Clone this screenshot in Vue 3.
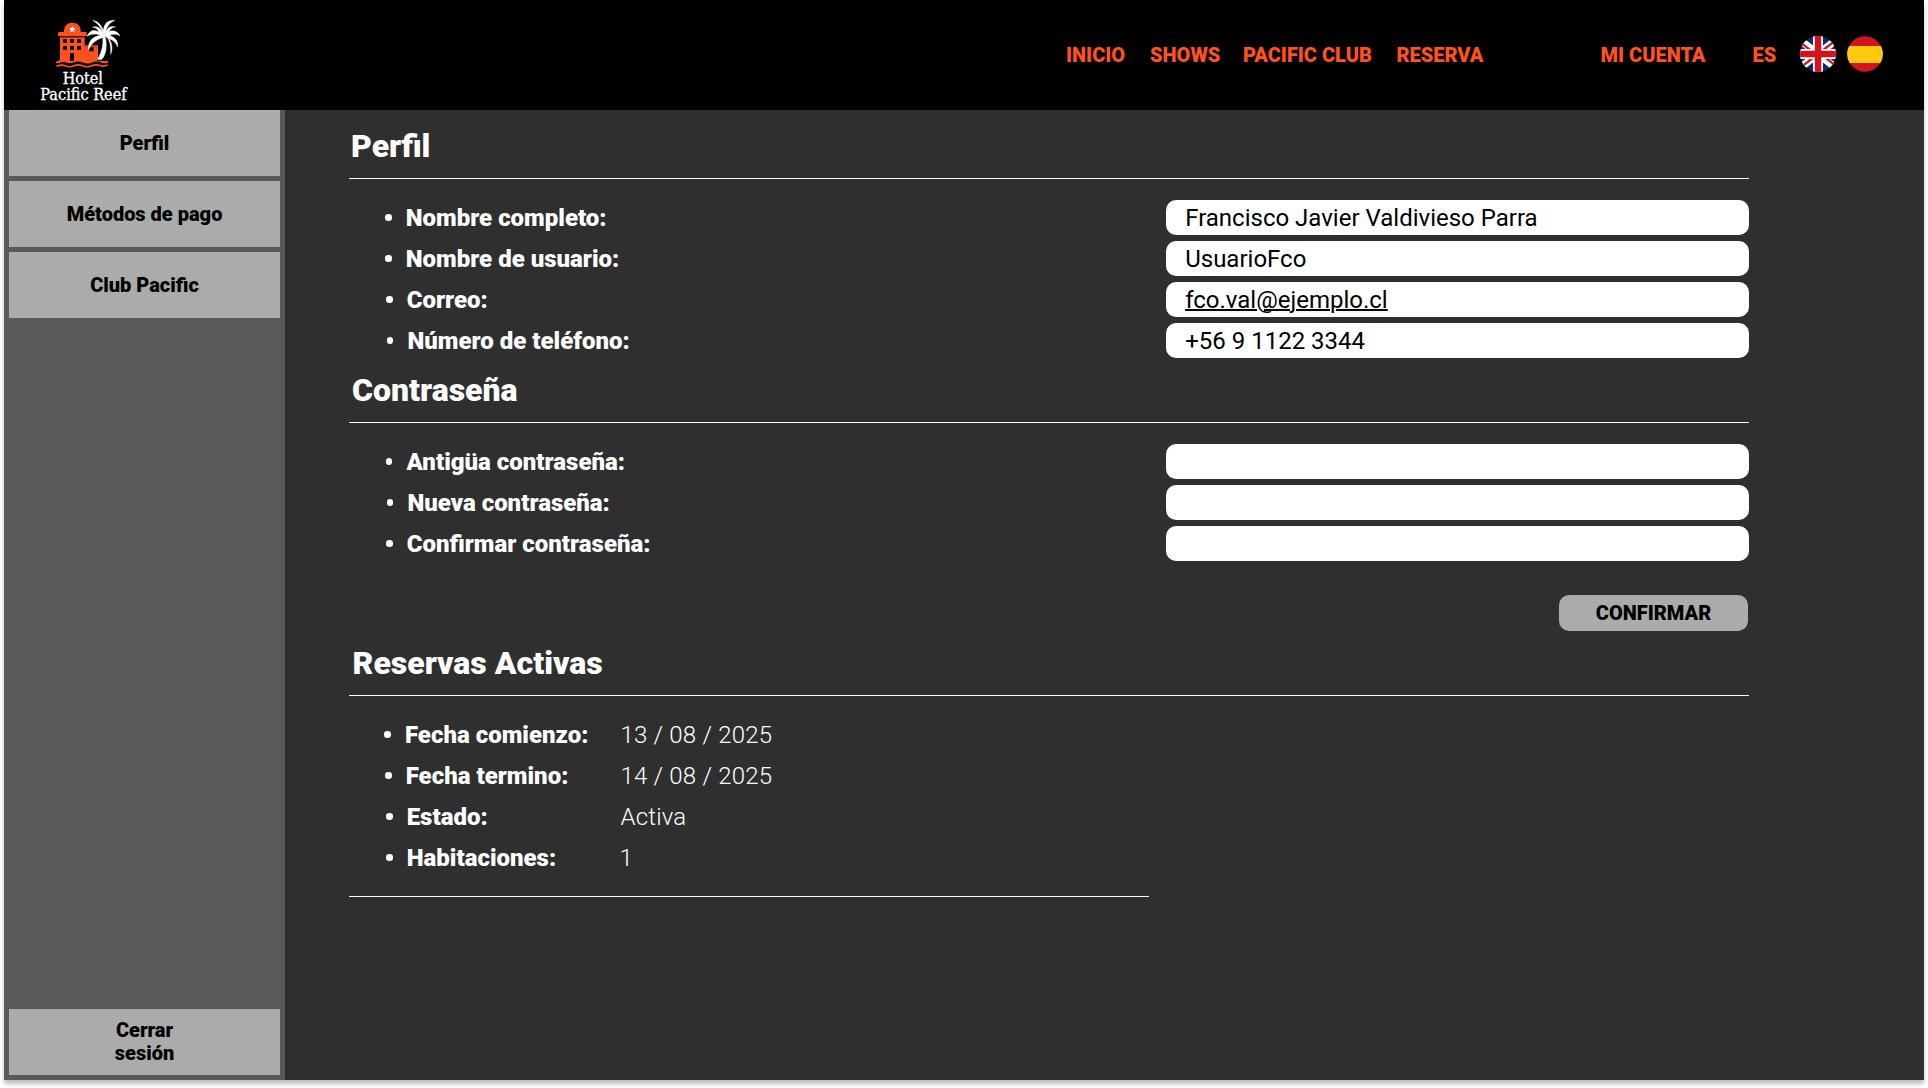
<script setup>
const nav = ['INICIO', 'SHOWS', 'PACIFIC CLUB', 'RESERVA', 'MI CUENTA', 'ES']
const menu = ['Perfil', 'Métodos de pago', 'Club Pacific']
const profile = [
  { label: 'Nombre completo:', value: 'Francisco Javier Valdivieso Parra', nudge: 0 },
  { label: 'Nombre de usuario:', value: 'UsuarioFco', nudge: 0 },
  { label: 'Correo:', value: 'fco.val@ejemplo.cl', link: true, nudge: 1 },
  { label: 'Número de teléfono:', value: '+56 9 1122 3344', nudge: 1.7 },
]
const password = [
  { label: 'Antigüa contraseña:', nudge: 0.9 },
  { label: 'Nueva contraseña:', nudge: 1.7 },
  { label: 'Confirmar contraseña:', nudge: 1 },
]
const booking = [
  { label: 'Fecha comienzo:', value: '13 / 08 / 2025', nudge: -0.7 },
  { label: 'Fecha termino:', value: '14 / 08 / 2025', nudge: 0 },
  { label: 'Estado:', value: 'Activa', nudge: 1 },
  { label: 'Habitaciones:', value: '1', nudge: 1, count: true },
]
</script>

<template>
  <div class="page">
    <header class="top">
      <svg class="logo" viewBox="0 0 300 300" width="100" height="100">
        <g fill="#ff5120">
          <path d="M72 66V60Q74 39 97 38Q120 39 122 60V66H137Q140 66 140 69V78H54V69Q54 66 57 66Z" />
          <path d="M60 80H134V105H174V146L171 153H204V159Q190 161 181 157Q168 152 155 158Q140 164 127 157Q114 152 102 157Q89 163 76 157Q66 154 58 159L48 160V155Q54 154 60 150Z" />
        </g>
        <path d="M49 169Q64 163 76 167Q89 173 102 167Q114 162 127 167Q141 173 155 167Q168 162 181 167Q191 170 203 165" fill="none" stroke="#ff5120" stroke-width="5" />
        <path d="M60 82H132M134 108H172" stroke="#842a11" stroke-width="3" />
        <path d="M69 87h12v11h-12zM90 87h12v11h-12zM111 87h12v11h-12zM69 108h12v11h-12zM90 108h12v11h-12zM111 108h12v11h-12zM90 129h12v24h-12zM148 112h13v12h-13z" fill="#000" />
        <path d="M97 48l2.700 6.300 7 .7-5.200 4.800 1.500 7.200-6-3.700-6 3.700 1.500-7.200-5.200-4.800 7-.7z" fill="#fff" />
        <g fill="#fff" stroke="#fff" stroke-width="1.200" stroke-linejoin="round">
          <path d="M188 78L195 76Q203 110 195 131Q192 142 184 149L173 148Q184 127 187 112Q190 95 188 78Z" />
          <path d="M191 72Q176 43 157 52Q169 50 177 66Q153 52 141 79Q161 67 181 76Q143 83 145 119Q159 91 187 83L196 78Q214 90 212 133Q222 112 208 86Q225 91 233 111Q237 86 208 76Q225 69 240 77Q229 58 206 64Q217 50 227 51Q205 44 197 67Q200 43 224 31Q193 29 190 61Q181 35 158 31Q181 45 191 72Z" />
        </g>
        <g class="logo-text" fill="#fff">
          <text x="68" y="222" textLength="121" lengthAdjust="spacingAndGlyphs">Hotel</text>
          <text x="1" y="270" textLength="259" lengthAdjust="spacingAndGlyphs">Pacific Reef</text>
        </g>
      </svg>
      <nav class="nav">
        <a v-for="item in nav" :key="item">{{ item }}</a>
      </nav>
      <div class="flags">
        <svg viewBox="0 0 36 36" width="36" height="36">
          <defs><clipPath id="round"><circle cx="18" cy="18" r="18" /></clipPath></defs>
          <g clip-path="url(#round)">
            <path d="M0 0H36V36H0Z" fill="#082b69" />
            <path d="M-4 1L40 35M40 1L-4 35" stroke="#fff" stroke-width="7.500" />
            <path d="M-4 3L18 20M40 1L18 18M-4 35L18 18M40 33L18 16" stroke="#d3141f" stroke-width="2.300" />
            <path d="M18 0V36M0 18H36" stroke="#fff" stroke-width="10" />
            <path d="M18 0V36M0 18H36" stroke="#d3141f" stroke-width="6.500" />
          </g>
        </svg>
        <svg viewBox="0 0 36 36" width="36" height="36">
          <circle cx="18" cy="18" r="17.800" fill="#d3141f" />
          <path d="M2.100 10H33.900A17.800 17.800 0 0 1 33.300 27H2.700A17.800 17.800 0 0 1 2.100 10Z" fill="#ffc90e" />
        </svg>
      </div>
    </header>

    <div class="body">
      <aside class="side">
        <button v-for="item in menu" :key="item">{{ item }}</button>
        <button class="logout">Cerrar<br />sesión</button>
      </aside>

      <main class="content">
        <section class="profile">
          <h2>Perfil</h2>
          <div v-for="row in profile" :key="row.label" class="row">
            <span class="label" :style="{ paddingLeft: 36 + row.nudge + 'px' }">{{ row.label }}</span>
            <span class="field"><span :class="{ link: row.link }">{{ row.value }}</span></span>
          </div>
        </section>

        <section class="password">
          <h2>Contraseña</h2>
          <div v-for="row in password" :key="row.label" class="row">
            <span class="label" :style="{ paddingLeft: 36 + row.nudge + 'px' }">{{ row.label }}</span>
            <span class="field"></span>
          </div>
          <button class="confirm">CONFIRMAR</button>
        </section>

        <section class="booking">
          <h2>Reservas Activas</h2>
          <div v-for="row in booking" :key="row.label" class="row">
            <span class="label" :style="{ paddingLeft: 36 + row.nudge + 'px' }">{{ row.label }}</span>
            <span class="value" :class="{ count: row.count }">{{ row.value }}</span>
          </div>
          <hr />
        </section>
      </main>
    </div>
  </div>
</template>

<style>
body {
  margin: 0;
  background: #fff;
  overflow: hidden;
}
</style>

<style scoped>
.page {
  width: 1920px;
  height: 1080px;
  margin: 0 4px 8px;
  display: flex;
  flex-direction: column;
  background: #2f2f2f;
  box-shadow: 0 4px 4px rgba(0, 0, 0, 0.25);
  font-family: Roboto, "Liberation Sans", sans-serif;
  font-size: 24px;
  color: #fff;
}
.top {
  height: 110px;
  flex: none;
  box-sizing: border-box;
  display: flex;
  align-items: center;
  background: #000;
  padding: 0 41px 0 36px;
}
.logo {
  flex: none;
  margin-top: 10px;
  overflow: visible;
}
.logo-text {
  font-family: "DejaVu Serif Condensed", "DejaVu Serif", serif;
  font-size: 49px;
  stroke: #fff;
  stroke-width: 1px;
}
.nav {
  margin-left: 926px;
  display: grid;
  grid-template-columns: 84px 93px 153.500px 204px 152px 47.500px;
  font-size: 20px;
  font-weight: 900;
  color: #ff5120;
  white-space: nowrap;
}
.flags {
  display: flex;
  gap: 10.500px;
  margin-top: -2px;
}
.flags svg {
  display: block;
}
.body {
  flex: 1;
  display: flex;
}
button {
  border: 0;
  padding: 0;
  background: #ababab;
  color: #000;
  font: 900 20px/23px Roboto, "Liberation Sans", sans-serif;
}
.side {
  width: 281px;
  box-sizing: border-box;
  padding: 0 5px 5px;
  display: flex;
  flex-direction: column;
  gap: 5px;
  background: #595959;
}
.side button {
  height: 66px;
}
.side .logout {
  margin-top: auto;
}
.content {
  width: 1400px;
  margin-left: 64px;
  padding-top: 12px;
}
section {
  display: flex;
  flex-direction: column;
}
.profile {
  height: 244px;
}
.password {
  height: 273px;
}
h2 {
  flex: none;
  margin: 0 0 21px;
  height: 57px;
  box-sizing: border-box;
  padding: 4px 0 0 2px;
  border-bottom: 1px solid #fff;
  font-size: 32px;
  line-height: 40px;
  font-weight: 900;
}
.password h2 {
  padding-left: 3px;
}
.booking h2 {
  padding-left: 3.500px;
}
.row {
  flex: none;
  height: 35px;
  margin-bottom: 6px;
  display: flex;
  align-items: center;
}
.label {
  width: 817px;
  box-sizing: border-box;
  display: flex;
  align-items: center;
  font-weight: 900;
}
.label::before {
  content: "";
  width: 6.500px;
  height: 6.500px;
  margin-right: 14.200px;
  border-radius: 50%;
  background: #fff;
}
.field {
  width: 583px;
  height: 35px;
  box-sizing: border-box;
  padding-left: 19.200px;
  border-radius: 10px;
  background: #fff;
  color: #000;
  line-height: 36px;
}
.link {
  text-decoration: underline;
  text-decoration-thickness: 1.500px;
}
.confirm {
  flex: none;
  width: 189px;
  height: 36px;
  margin: 28px 1px 0 auto;
  border-radius: 10px;
}
.booking .label {
  width: 271.500px;
}
.value {
  font-weight: 300;
  letter-spacing: 0.200px;
}
.count {
  margin-left: -1px;
}
hr {
  width: 800px;
  height: 1px;
  margin: 15px 0 0;
  border: 0;
  background: #fff;
}
</style>
